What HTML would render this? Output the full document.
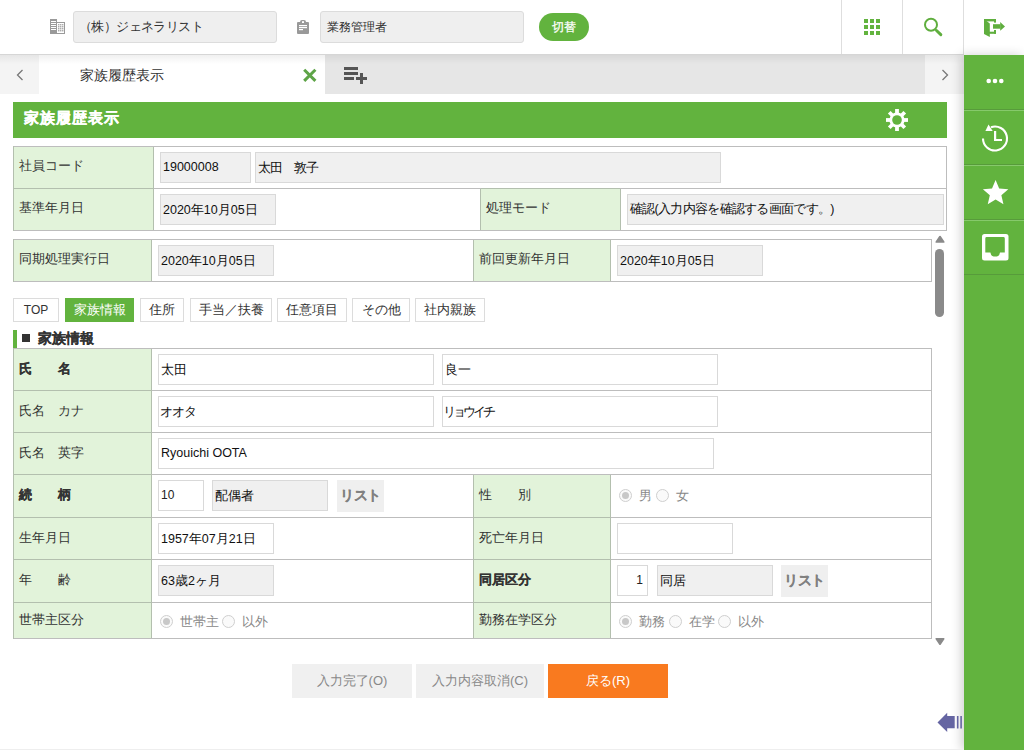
<!DOCTYPE html>
<html lang="ja">
<head>
<meta charset="utf-8">
<style>
*{box-sizing:border-box;margin:0;padding:0}
html,body{width:1024px;height:750px;overflow:hidden;background:#fff}
body{position:relative;font-family:"Liberation Sans",sans-serif;font-size:13px;color:#333}
.a{position:absolute}
.inp{position:absolute;height:31px;border:1px solid #d9d9d9;background:#fff;line-height:29px;padding-left:2px;font-size:13px;color:#111;white-space:nowrap;overflow:hidden}
.inp.g{background:#f0f0f0}
.lab{position:absolute;background:#e2f3da;color:#333;font-size:13px;white-space:nowrap;padding-left:5px}
.hl{position:absolute;height:1px;background:#bdbdbd}
.vl{position:absolute;width:1px;background:#bdbdbd}
.tab{position:absolute;top:298px;height:24px;border:1px solid #dcdcdc;background:#fff;text-align:center;line-height:22px;font-size:12.5px;color:#333}
.btn{position:absolute;top:664px;height:34px;background:#f0f0f0;color:#888;text-align:center;line-height:34px;font-size:13px}
.rad{position:absolute;width:13px;height:13px;border:1px solid #cfcfcf;border-radius:50%;background:#fafafa}
.rad.on::after{content:"";position:absolute;left:2px;top:2px;width:7px;height:7px;border-radius:50%;background:#c8c8c8}
.d{font-size:12.5px}
.rt{position:absolute;color:#888;font-size:13px;white-space:nowrap;margin-top:1px}
</style>
</head>
<body>
<!-- HEADER -->
<div class="a" style="left:0;top:0;width:1024px;height:55px;background:#fff"></div><div class="a" style="left:0;top:54px;width:964px;height:1px;background:#d6d6d6"></div>
<svg class="a" style="left:50px;top:19px" width="16" height="16" viewBox="0 0 16 16">
 <rect x="0" y="0" width="7" height="15" fill="#9a9a9a"/>
 <g fill="#fff"><rect x="1" y="2" width="5" height="1"/><rect x="1" y="4" width="5" height="1"/><rect x="1" y="6" width="5" height="1"/><rect x="1" y="8" width="5" height="1"/><rect x="1" y="10" width="5" height="1"/></g>
 <rect x="6" y="3" width="9" height="12" fill="#9a9a9a"/>
 <rect x="7" y="4" width="7" height="10" fill="#fff"/>
 <g fill="#999"><rect x="8.1" y="5.1" width="1.3" height="1.3"/><rect x="10.1" y="5.1" width="1.3" height="1.3"/><rect x="12.1" y="5.1" width="1.3" height="1.3"/><rect x="8.1" y="7.1" width="1.3" height="1.3"/><rect x="10.1" y="7.1" width="1.3" height="1.3"/><rect x="12.1" y="7.1" width="1.3" height="1.3"/><rect x="8.1" y="9.1" width="1.3" height="1.3"/><rect x="10.1" y="9.1" width="1.3" height="1.3"/><rect x="12.1" y="9.1" width="1.3" height="1.3"/><rect x="8.1" y="11.1" width="1.3" height="1.3"/><rect x="10.1" y="11.1" width="1.3" height="1.3"/><rect x="12.1" y="11.1" width="1.3" height="1.3"/></g>
</svg>
<div class="a" style="left:73px;top:11px;width:204px;height:32px;background:#efefef;border:1px solid #dcdcdc;border-radius:3px;line-height:30px;padding-left:5px;font-size:13px;letter-spacing:-0.6px;color:#333">（株）ジェネラリスト</div>
<svg class="a" style="left:297px;top:19px" width="13" height="16" viewBox="0 0 13 16">
 <rect x="0" y="3" width="12" height="12" rx="1" fill="#999"/>
 <path d="M3 4 V3 Q3 1 5 1 H7 Q9 1 9 3 V4 Z" fill="#999"/>
 <rect x="5" y="2.2" width="2" height="1.8" fill="#fff"/>
 <rect x="2" y="6" width="8" height="1.2" fill="#fff"/><rect x="2" y="8" width="8" height="1.2" fill="#fff"/><rect x="2" y="10" width="4" height="1.2" fill="#fff"/>
</svg>
<div class="a" style="left:320px;top:11px;width:204px;height:32px;background:#efefef;border:1px solid #dcdcdc;border-radius:3px;line-height:30px;padding-left:6px;font-size:12px;color:#333">業務管理者</div>
<div class="a" style="left:539px;top:13px;width:50px;height:28px;background:#62b33e;border-radius:14px;color:#fff;text-align:center;line-height:28px;font-size:12px;-webkit-text-stroke:0.25px #fff">切替</div>
<div class="vl" style="left:841px;top:0;height:54px;background:#dedede"></div>
<div class="vl" style="left:902px;top:0;height:54px;background:#dedede"></div>
<div class="vl" style="left:963px;top:0;height:54px;background:#dedede"></div>
<svg class="a" style="left:864px;top:19px" width="16" height="16" viewBox="0 0 16 16" fill="#62b33e">
 <rect x="0" y="0" width="4" height="4"/><rect x="6" y="0" width="4" height="4"/><rect x="12" y="0" width="4" height="4"/>
 <rect x="0" y="6" width="4" height="4"/><rect x="6" y="6" width="4" height="4"/><rect x="12" y="6" width="4" height="4"/>
 <rect x="0" y="12" width="4" height="4"/><rect x="6" y="12" width="4" height="4"/><rect x="12" y="12" width="4" height="4"/>
</svg>
<svg class="a" style="left:918px;top:12px" width="30" height="30" viewBox="0 0 30 30">
 <circle cx="13" cy="12.8" r="6" fill="none" stroke="#5fae3e" stroke-width="2"/>
 <line x1="18.5" y1="18.5" x2="22.8" y2="22.6" stroke="#5fae3e" stroke-width="3" stroke-linecap="round"/>
</svg>
<svg class="a" style="left:978px;top:14px" width="30" height="26" viewBox="0 0 30 26" fill="#5fae3e">
 <rect x="6" y="5" width="12" height="2.4"/>
 <rect x="16" y="5" width="2" height="3.6"/>
 <rect x="16" y="16" width="2" height="3.8"/>
 <rect x="11" y="17.7" width="7" height="2.1"/>
 <path d="M6 5 L11.8 9.6 V23 L6 20 Z"/>
 <rect x="15" y="10.2" width="7.4" height="4.5"/>
 <path d="M22.2 8 L27 12.4 L22.2 16.8 Z"/>
</svg>

<!-- TAB BAR -->
<div class="a" style="left:0;top:55px;width:964px;height:39px;background:#e6e6e6"></div>
<div class="a" style="left:0;top:55px;width:39px;height:39px;background:#f4f4f4"></div>
<div class="a" style="left:39px;top:55px;width:286px;height:39px;background:#fff"></div>
<div class="a" style="left:925px;top:55px;width:39px;height:39px;background:#f4f4f4"></div>
<div class="a" style="left:0;top:55px;width:964px;height:9px;background:linear-gradient(rgba(0,0,0,0.06),rgba(0,0,0,0))"></div>
<svg class="a" style="left:16px;top:69px" width="8" height="12" viewBox="0 0 8 12"><path d="M6.5 1 L1.5 6 L6.5 11" fill="none" stroke="#777" stroke-width="1.3"/></svg>
<svg class="a" style="left:941px;top:69px" width="8" height="12" viewBox="0 0 8 12"><path d="M1.5 1 L6.5 6 L1.5 11" fill="none" stroke="#777" stroke-width="1.3"/></svg>
<div class="a" style="left:80px;top:65px;font-size:14px;line-height:20px;color:#333">家族履歴表示</div>
<svg class="a" style="left:302px;top:67px" width="16" height="16" viewBox="0 0 16 16"><path d="M2.2 2.7 L13.4 13.9 M13.4 2.7 L2.2 13.9" stroke="#5ea447" stroke-width="3"/></svg>
<svg class="a" style="left:343px;top:66px" width="25" height="19" viewBox="0 0 25 19" fill="#555">
 <rect x="1" y="1" width="14" height="3"/><rect x="1" y="6" width="14" height="3"/><rect x="1" y="11" width="10" height="3"/>
 <rect x="13" y="11" width="11" height="3"/><rect x="17" y="7" width="3" height="11"/>
</svg>

<!-- SIDEBAR -->
<div class="a" style="left:964px;top:55px;width:60px;height:695px;background:#62b33e;box-shadow:-3px 0 10px rgba(0,0,0,0.18)"></div>
<div class="hl" style="left:964px;top:109px;width:60px;background:#579b3b"></div><div class="hl" style="left:964px;top:110px;width:60px;background:#86c96b"></div>
<div class="hl" style="left:964px;top:164px;width:60px;background:#579b3b"></div><div class="hl" style="left:964px;top:165px;width:60px;background:#86c96b"></div>
<div class="hl" style="left:964px;top:219px;width:60px;background:#579b3b"></div><div class="hl" style="left:964px;top:220px;width:60px;background:#86c96b"></div>
<div class="hl" style="left:964px;top:274px;width:60px;background:#579b3b"></div>
<svg class="a" style="left:986px;top:78px" width="18" height="6" viewBox="0 0 18 6" fill="#fff"><circle cx="2.7" cy="3" r="2.3"/><circle cx="9" cy="3" r="2.3"/><circle cx="15.3" cy="3" r="2.3"/></svg>
<svg class="a" style="left:976px;top:118px" width="40" height="40" viewBox="0 0 40 40">
 <path d="M7 20.5 A12 12 0 1 0 15 9.2" fill="none" stroke="#fff" stroke-width="2.1"/>
 <path d="M12.5 6.5 L9.4 12.9 L16.7 12.9 Z" fill="#fff"/>
 <path d="M19.1 13 V22 H26" fill="none" stroke="#fff" stroke-width="2.2"/>
</svg>
<svg class="a" style="left:976px;top:172px" width="40" height="40" viewBox="0 0 40 40"><path transform="translate(4.36 5.46) scale(1.27)" d="M12 17.27L18.18 21l-1.64-7.03L22 9.24l-7.19-.61L12 2 9.19 8.63 2 9.24l5.46 4.73L5.82 21z" fill="#fff"/></svg>
<svg class="a" style="left:981px;top:233px" width="28" height="28" viewBox="0 0 28 28">
 <rect x="1" y="1" width="26.5" height="26.5" rx="2.5" fill="#fff"/>
 <path d="M4.3 5.5 Q4.3 4.1 5.7 4.1 H22.4 Q23.8 4.1 23.8 5.5 V19.6 H19 Q18.5 23.6 14.2 23.6 Q9.9 23.6 9.4 19.6 H4.3 Z" fill="#62b33e"/>
</svg>

<!-- MAIN HEADING -->
<div class="a" style="left:13px;top:102px;width:934px;height:36px;background:#62b33e"></div>
<div class="a" style="left:24px;top:108px;font-size:15px;line-height:20px;letter-spacing:1px;font-weight:bold;color:#fff;-webkit-text-stroke:0.3px #fff">家族履歴表示</div>
<svg class="a" style="left:885px;top:108px" width="24" height="24" viewBox="0 0 24 24">
 <g fill="#fff" transform="translate(12 12)">
  <circle r="7.6"/>
  <rect x="-1.9" y="-11" width="3.8" height="22"/>
  <rect x="-1.9" y="-11" width="3.8" height="22" transform="rotate(45)"/>
  <rect x="-1.9" y="-11" width="3.8" height="22" transform="rotate(90)"/>
  <rect x="-1.9" y="-11" width="3.8" height="22" transform="rotate(135)"/>
  <circle r="4.8" fill="#62b33e"/>
 </g>
</svg>

<!-- TABLE 1 -->
<div class="a" style="left:13px;top:146px;width:934px;height:85px;border:1px solid #bdbdbd;background:#fff"></div>
<div class="lab" style="left:14px;top:147px;width:139px;height:41px;line-height:37px">社員コード</div>
<div class="lab" style="left:14px;top:189px;width:139px;height:41px;line-height:37px">基準年月日</div>
<div class="lab" style="left:481px;top:189px;width:139px;height:41px;line-height:37px">処理モード</div>
<div class="hl" style="left:14px;top:188px;width:932px"></div>
<div class="vl" style="left:153px;top:147px;height:83px"></div>
<div class="vl" style="left:480px;top:189px;height:41px"></div>
<div class="vl" style="left:620px;top:189px;height:41px"></div>
<div class="inp g" style="left:160px;top:152px;width:91px;font-size:12.5px">19000008</div>
<div class="inp g" style="left:255px;top:152px;width:466px;letter-spacing:-1px">太田　敦子</div>
<div class="inp g" style="left:160px;top:194px;width:116px"><span class="d">2020</span>年<span class="d">10</span>月<span class="d">05</span>日</div>
<div class="inp g" style="left:627px;top:194px;width:317px;font-size:12.5px;letter-spacing:-0.7px">確認(入力内容を確認する画面です。)</div>

<!-- SCROLLBAR -->
<svg class="a" style="left:934px;top:234px" width="12" height="10" viewBox="0 0 12 10"><path d="M2.3 8 H9.7 L6 2.6 Z" fill="#8a8a8a" stroke="#8a8a8a" stroke-width="1.7" stroke-linejoin="round"/></svg>
<div class="a" style="left:935px;top:249px;width:9px;height:68px;border-radius:4.5px;background:#8a8a8a"></div>
<svg class="a" style="left:934px;top:636px" width="12" height="10" viewBox="0 0 12 10"><path d="M2.3 2.8 H9.7 L6 8.2 Z" fill="#8a8a8a" stroke="#8a8a8a" stroke-width="1.7" stroke-linejoin="round"/></svg>

<!-- TABLE 2 -->
<div class="a" style="left:13px;top:239px;width:919px;height:43px;border:1px solid #bdbdbd;background:#fff"></div>
<div class="lab" style="left:14px;top:240px;width:137px;height:41px;line-height:37px">同期処理実行日</div>
<div class="vl" style="left:151px;top:240px;height:41px"></div>
<div class="vl" style="left:473px;top:240px;height:41px"></div>
<div class="lab" style="left:474px;top:240px;width:136px;height:41px;line-height:37px">前回更新年月日</div>
<div class="vl" style="left:610px;top:240px;height:41px"></div>
<div class="inp g" style="left:158px;top:245px;width:116px"><span class="d">2020</span>年<span class="d">10</span>月<span class="d">05</span>日</div>
<div class="inp g" style="left:617px;top:245px;width:146px"><span class="d">2020</span>年<span class="d">10</span>月<span class="d">05</span>日</div>

<!-- TABS -->
<div class="tab" style="left:13px;width:46px;font-size:12px">TOP</div>
<div class="tab" style="left:65px;width:69px;background:#62b33e;border-color:#62b33e;color:#fff">家族情報</div>
<div class="tab" style="left:140px;width:44px">住所</div>
<div class="tab" style="left:190px;width:82px">手当／扶養</div>
<div class="tab" style="left:277px;width:70px">任意項目</div>
<div class="tab" style="left:352px;width:58px">その他</div>
<div class="tab" style="left:415px;width:70px">社内親族</div>

<!-- SECTION HEADING -->
<div class="a" style="left:13px;top:330px;width:4px;height:18px;background:#62b33e"></div>
<div class="a" style="left:22px;top:334px;width:8px;height:8px;background:#333"></div>
<div class="a" style="left:38px;top:328px;font-size:14px;line-height:20px;font-weight:bold;color:#333;-webkit-text-stroke:0.15px #333">家族情報</div>

<!-- TABLE 3 -->
<div class="a" style="left:13px;top:348px;width:919px;height:291px;border:1px solid #bdbdbd;background:#fff"></div>
<div class="lab" style="left:14px;top:349px;width:137px;height:41px;line-height:39px;font-weight:bold;-webkit-text-stroke:0.2px #333">氏　　名</div>
<div class="lab" style="left:14px;top:391px;width:137px;height:41px;line-height:39px">氏名　カナ</div>
<div class="lab" style="left:14px;top:433px;width:137px;height:41px;line-height:39px">氏名　英字</div>
<div class="lab" style="left:14px;top:475px;width:137px;height:42px;line-height:40px;font-weight:bold;-webkit-text-stroke:0.2px #333">続　　柄</div>
<div class="lab" style="left:14px;top:518px;width:137px;height:41px;line-height:39px">生年月日</div>
<div class="lab" style="left:14px;top:560px;width:137px;height:42px;line-height:40px">年　　齢</div>
<div class="lab" style="left:14px;top:603px;width:137px;height:35px;line-height:33px">世帯主区分</div>
<div class="lab" style="left:474px;top:475px;width:136px;height:42px;line-height:40px">性　　別</div>
<div class="lab" style="left:474px;top:518px;width:136px;height:41px;line-height:39px">死亡年月日</div>
<div class="lab" style="left:474px;top:560px;width:136px;height:42px;line-height:40px;font-weight:bold;-webkit-text-stroke:0.2px #333">同居区分</div>
<div class="lab" style="left:474px;top:603px;width:136px;height:35px;line-height:33px">勤務在学区分</div>
<div class="hl" style="left:14px;top:390px;width:917px"></div>
<div class="hl" style="left:14px;top:432px;width:917px"></div>
<div class="hl" style="left:14px;top:474px;width:917px"></div>
<div class="hl" style="left:14px;top:517px;width:917px"></div>
<div class="hl" style="left:14px;top:559px;width:917px"></div>
<div class="hl" style="left:14px;top:602px;width:917px"></div>
<div class="vl" style="left:151px;top:349px;height:289px"></div>
<div class="vl" style="left:473px;top:475px;height:163px"></div>
<div class="vl" style="left:610px;top:475px;height:163px"></div>

<!-- greenish borders around label columns -->
<div class="hl" style="left:13px;top:188px;width:140px;background:#b3bfae"></div>
<div class="hl" style="left:481px;top:188px;width:139px;background:#b3bfae"></div>
<div class="vl" style="left:13px;top:146px;height:85px;background:#b3bfae"></div>
<div class="vl" style="left:153px;top:147px;height:83px;background:#b3bfae"></div>
<div class="vl" style="left:480px;top:189px;height:41px;background:#b3bfae"></div>
<div class="vl" style="left:620px;top:189px;height:41px;background:#b3bfae"></div>
<div class="vl" style="left:13px;top:239px;height:43px;background:#b3bfae"></div>
<div class="vl" style="left:151px;top:240px;height:41px;background:#b3bfae"></div>
<div class="vl" style="left:473px;top:240px;height:41px;background:#b3bfae"></div>
<div class="vl" style="left:610px;top:240px;height:41px;background:#b3bfae"></div>
<div class="vl" style="left:13px;top:348px;height:291px;background:#b3bfae"></div>
<div class="vl" style="left:151px;top:349px;height:289px;background:#b3bfae"></div>
<div class="vl" style="left:473px;top:475px;height:163px;background:#b3bfae"></div>
<div class="vl" style="left:610px;top:475px;height:163px;background:#b3bfae"></div>
<div class="hl" style="left:14px;top:390px;width:137px;background:#b3bfae"></div>
<div class="hl" style="left:14px;top:432px;width:137px;background:#b3bfae"></div>
<div class="hl" style="left:14px;top:474px;width:137px;background:#b3bfae"></div>
<div class="hl" style="left:14px;top:517px;width:137px;background:#b3bfae"></div>
<div class="hl" style="left:14px;top:559px;width:137px;background:#b3bfae"></div>
<div class="hl" style="left:14px;top:602px;width:137px;background:#b3bfae"></div>
<div class="hl" style="left:474px;top:517px;width:136px;background:#b3bfae"></div>
<div class="hl" style="left:474px;top:559px;width:136px;background:#b3bfae"></div>
<div class="hl" style="left:474px;top:602px;width:136px;background:#b3bfae"></div>

<div class="inp" style="left:158px;top:354px;width:276px">太田</div>
<div class="inp" style="left:442px;top:354px;width:276px">良一</div>
<div class="inp" style="left:158px;top:396px;width:276px;padding-left:1px;letter-spacing:-1px">オオタ</div>
<div class="inp" style="left:442px;top:396px;width:276px;padding-left:0;letter-spacing:-3px">リョウイチ</div>
<div class="inp" style="left:158px;top:438px;width:556px;font-size:12.5px">Ryouichi OOTA</div>
<div class="inp" style="left:158px;top:480px;width:46px;font-size:12px;color:#222">10</div>
<div class="inp g" style="left:212px;top:480px;width:116px">配偶者</div>
<div class="a" style="left:337px;top:480px;width:47px;height:32px;background:#efefef;color:#808080;font-weight:bold;text-align:center;line-height:30px;font-size:14px;letter-spacing:-0.5px;-webkit-text-stroke:0.1px #808080">リスト</div>
<div class="inp" style="left:158px;top:523px;width:116px"><span class="d">1957</span>年<span class="d">07</span>月<span class="d">21</span>日</div>
<div class="inp g" style="left:158px;top:565px;width:116px"><span class="d">63</span>歳<span class="d">2</span>ヶ月</div>
<div class="rad on" style="left:160px;top:615px"></div><div class="rt" style="left:180px;top:612px;line-height:18px">世帯主</div>
<div class="rad" style="left:222px;top:615px"></div><div class="rt" style="left:242px;top:612px;line-height:18px">以外</div>

<div class="rad on" style="left:619px;top:489px"></div><div class="rt" style="left:639px;top:486px;line-height:18px">男</div>
<div class="rad" style="left:656px;top:489px"></div><div class="rt" style="left:676px;top:486px;line-height:18px">女</div>
<div class="inp" style="left:617px;top:523px;width:116px"></div>
<div class="inp" style="left:617px;top:565px;width:31px;text-align:right;padding-right:4px;font-size:12px;color:#222">1</div>
<div class="inp g" style="left:657px;top:565px;width:116px">同居</div>
<div class="a" style="left:781px;top:565px;width:47px;height:32px;background:#efefef;color:#808080;font-weight:bold;text-align:center;line-height:30px;font-size:14px;letter-spacing:-0.5px;-webkit-text-stroke:0.1px #808080">リスト</div>
<div class="rad on" style="left:619px;top:615px"></div><div class="rt" style="left:639px;top:612px;line-height:18px">勤務</div>
<div class="rad" style="left:669px;top:615px"></div><div class="rt" style="left:689px;top:612px;line-height:18px">在学</div>
<div class="rad" style="left:718px;top:615px"></div><div class="rt" style="left:738px;top:612px;line-height:18px">以外</div>

<!-- BUTTONS -->
<div class="btn" style="left:292px;width:120px">入力完了(O)</div>
<div class="btn" style="left:416px;width:128px">入力内容取消(C)</div>
<div class="btn" style="left:548px;width:120px;background:#f97a1f;color:#fff">戻る(R)</div>

<!-- bottom arrow -->
<svg class="a" style="left:934px;top:708px" width="32" height="28" viewBox="0 0 32 28" fill="#6565a2">
 <path d="M3.5 14.4 L13.2 4.7 V8 H20.7 V20.3 H13.2 V23.9 Z"/>
 <rect x="22.9" y="8" width="1.6" height="12.5"/><rect x="26.3" y="8" width="1.6" height="12.5"/>
</svg>
<div class="a" style="left:0;top:749px;width:964px;height:1px;background:#eee"></div>
</body>
</html>
